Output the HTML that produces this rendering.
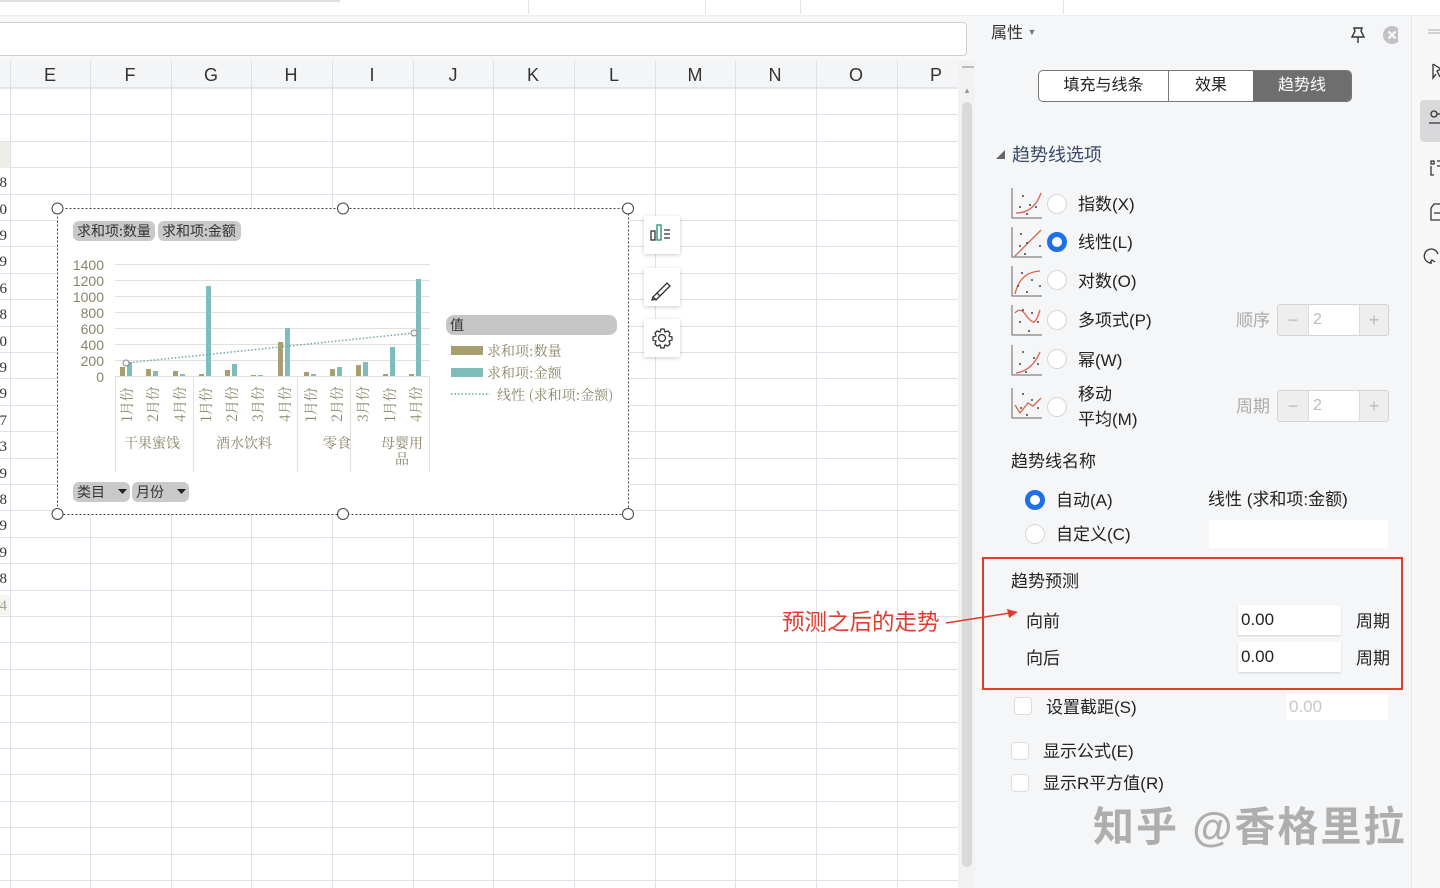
<!DOCTYPE html>
<html><head><meta charset="utf-8"><style>
*{margin:0;padding:0;box-sizing:border-box}
body{width:1440px;height:888px;overflow:hidden;position:relative;background:#fff;font-family:"Liberation Sans","Noto Sans CJK SC",sans-serif;color:#222}
.a{position:absolute}
.t{position:absolute;font-size:16px;white-space:nowrap;line-height:1}
.radio{position:absolute;width:20px;height:20px;border-radius:50%;border:1px solid #d6d6d6;background:#fff}
.radio.on{border:5px solid #1f6fe8;background:#fff}
.cb{position:absolute;width:18px;height:18px;border-radius:4px;border:1px solid #dcdcdc;background:#fff}
.inp{position:absolute;background:#fff;box-shadow:0 1px 2px rgba(0,0,0,.15);font-size:17px;padding:6px 3px;line-height:1}
.spin{position:absolute;width:112px;height:32px;border:1px solid #d4d4d4;border-radius:3px;background:#eee;display:flex}
.spin div{display:flex;align-items:center;justify-content:center;color:#bbb;font-size:18px}
</style></head><body>
<div class="a" style="left:0;top:0;width:1440px;height:16px;background:#fff;border-bottom:1px solid #eee"></div>
<div class="a" style="left:0;top:0;width:340px;height:2px;background:#dfe0e6"></div>
<div class="a" style="left:528px;top:0;width:1px;height:14px;background:#e4e4e4"></div>
<div class="a" style="left:705px;top:0;width:1px;height:14px;background:#e4e4e4"></div>
<div class="a" style="left:800px;top:0;width:1px;height:14px;background:#e4e4e4"></div>
<div class="a" style="left:1063px;top:0;width:1px;height:14px;background:#e4e4e4"></div>
<div class="a" style="left:0;top:16px;width:975px;height:44px;background:#f7f7f8"></div>
<div class="a" style="left:-6px;top:22px;width:973px;height:34px;background:#fff;border:1px solid #cfcfd2;border-radius:4px"></div>
<svg class="a" style="left:0;top:60px" width="958" height="828">
<rect x="0" y="0" width="958" height="28" fill="#f4f5f7"/>
<line x1="0" y1="28" x2="958" y2="28" stroke="#cfd2da"/>
<g stroke="#dfe1ea" stroke-width="1">
<line x1="10.5" y1="0" x2="10.5" y2="828"/><line x1="90.5" y1="0" x2="90.5" y2="828"/><line x1="171.5" y1="0" x2="171.5" y2="828"/><line x1="251.5" y1="0" x2="251.5" y2="828"/><line x1="332.5" y1="0" x2="332.5" y2="828"/><line x1="413.5" y1="0" x2="413.5" y2="828"/><line x1="493.5" y1="0" x2="493.5" y2="828"/><line x1="574.5" y1="0" x2="574.5" y2="828"/><line x1="655.5" y1="0" x2="655.5" y2="828"/><line x1="735.5" y1="0" x2="735.5" y2="828"/><line x1="816.5" y1="0" x2="816.5" y2="828"/><line x1="897.5" y1="0" x2="897.5" y2="828"/>
</g>
<g stroke="#dfe1ea">
<line x1="0" x2="958" y1="54.5" y2="54.5"/><line x1="0" x2="958" y1="81.5" y2="81.5"/><line x1="0" x2="958" y1="107.5" y2="107.5"/><line x1="0" x2="958" y1="134.5" y2="134.5"/><line x1="0" x2="958" y1="160.5" y2="160.5"/><line x1="0" x2="958" y1="186.5" y2="186.5"/><line x1="0" x2="958" y1="213.5" y2="213.5"/><line x1="0" x2="958" y1="239.5" y2="239.5"/><line x1="0" x2="958" y1="266.5" y2="266.5"/><line x1="0" x2="958" y1="292.5" y2="292.5"/><line x1="0" x2="958" y1="318.5" y2="318.5"/><line x1="0" x2="958" y1="345.5" y2="345.5"/><line x1="0" x2="958" y1="371.5" y2="371.5"/><line x1="0" x2="958" y1="398.5" y2="398.5"/><line x1="0" x2="958" y1="424.5" y2="424.5"/><line x1="0" x2="958" y1="450.5" y2="450.5"/><line x1="0" x2="958" y1="477.5" y2="477.5"/><line x1="0" x2="958" y1="503.5" y2="503.5"/><line x1="0" x2="958" y1="530.5" y2="530.5"/><line x1="0" x2="958" y1="556.5" y2="556.5"/><line x1="0" x2="958" y1="582.5" y2="582.5"/><line x1="0" x2="958" y1="609.5" y2="609.5"/><line x1="0" x2="958" y1="635.5" y2="635.5"/><line x1="0" x2="958" y1="662.5" y2="662.5"/><line x1="0" x2="958" y1="688.5" y2="688.5"/><line x1="0" x2="958" y1="714.5" y2="714.5"/><line x1="0" x2="958" y1="741.5" y2="741.5"/><line x1="0" x2="958" y1="767.5" y2="767.5"/><line x1="0" x2="958" y1="794.5" y2="794.5"/><line x1="0" x2="958" y1="820.5" y2="820.5"/>
</g>
<rect x="0" y="82" width="10" height="26" fill="#efeee4"/>
<g font-family="Liberation Sans" font-size="18" fill="#333" text-anchor="middle">
<text x="50" y="21">E</text><text x="130" y="21">F</text><text x="211" y="21">G</text><text x="291" y="21">H</text><text x="372" y="21">I</text><text x="453" y="21">J</text><text x="533" y="21">K</text><text x="614" y="21">L</text><text x="695" y="21">M</text><text x="775" y="21">N</text><text x="856" y="21">O</text><text x="936" y="21">P</text>
</g>
<g font-family="Liberation Serif" font-size="15" fill="#333" text-anchor="end">
<text x="7" y="127">8</text><text x="7" y="154">0</text><text x="7" y="180">9</text><text x="7" y="206">9</text><text x="7" y="233">6</text><text x="7" y="259">8</text><text x="7" y="286">0</text><text x="7" y="312">9</text><text x="7" y="338">9</text><text x="7" y="365">7</text><text x="7" y="391">3</text><text x="7" y="418">9</text><text x="7" y="444">8</text><text x="7" y="470">9</text><text x="7" y="497">9</text><text x="7" y="523">8</text><text x="7" y="550">4</text>
</g>
<rect x="0" y="535" width="10" height="20" fill="#efeee4" opacity=".6"/>
</svg>
<div class="a" style="left:958px;top:60px;width:17px;height:828px;background:#f2f2f3"></div>
<div class="a" style="left:962px;top:66px;width:12px;height:2px;border-top:1px solid #bbb;border-bottom:1px solid #bbb"></div>
<div class="a" style="left:963px;top:86px;font-size:8px;color:#999">▲</div>
<div class="a" style="left:962px;top:102px;width:10px;height:765px;background:#d9d9db;border-radius:5px"></div>
<svg class="a" style="left:50px;top:200px" width="640" height="322">
<rect x="7.5" y="8.5" width="571" height="306" fill="#fff" stroke="#444" stroke-dasharray="2,2"/>
<g fill="#fff" stroke="#444"><circle cx="7.5" cy="8.5" r="5.5"/><circle cx="293" cy="8.5" r="5.5"/><circle cx="578" cy="8.5" r="5.5"/><circle cx="7.5" cy="314" r="5.5"/><circle cx="293" cy="314" r="5.5"/><circle cx="578" cy="314" r="5.5"/></g>
<rect x="23" y="21" width="82" height="20" rx="6" fill="#c9c9c9"/><rect x="108" y="21" width="83" height="20" rx="6" fill="#c9c9c9"/>
<text x="27" y="36" font-size="14" fill="#333" font-family="Noto Sans CJK SC">求和项:数量</text>
<text x="112" y="36" font-size="14" fill="#333" font-family="Noto Sans CJK SC">求和项:金额</text>
<g stroke="#e1e0dc"><line x1="65" x2="380" y1="64.5" y2="64.5"/><line x1="65" x2="380" y1="80.5" y2="80.5"/><line x1="65" x2="380" y1="96.5" y2="96.5"/><line x1="65" x2="380" y1="112.5" y2="112.5"/><line x1="65" x2="380" y1="128.5" y2="128.5"/><line x1="65" x2="380" y1="144.5" y2="144.5"/><line x1="65" x2="380" y1="160.5" y2="160.5"/><line x1="65" x2="380" y1="176.5" y2="176.5"/></g>
<g font-size="14" fill="#8a8466" text-anchor="end" font-family="Liberation Sans"><text x="54" y="70">1400</text><text x="54" y="86">1200</text><text x="54" y="102">1000</text><text x="54" y="118">800</text><text x="54" y="134">600</text><text x="54" y="150">400</text><text x="54" y="166">200</text><text x="54" y="182">0</text></g>
<g fill="#a79f70">
<rect x="70" y="167" width="5" height="9"/><rect x="96" y="169" width="5" height="7"/><rect x="123" y="171" width="5" height="5"/><rect x="149" y="174" width="5" height="2"/><rect x="175" y="170" width="5" height="6"/><rect x="201" y="175" width="5" height="1"/><rect x="228" y="142" width="5" height="34"/><rect x="254" y="172" width="5" height="4"/><rect x="280" y="169" width="5" height="7"/><rect x="306" y="165" width="5" height="11"/><rect x="333" y="174" width="5" height="2"/><rect x="359" y="174" width="5" height="2"/>
</g>
<g fill="#7fbcbc">
<rect x="77" y="162" width="5" height="14"/><rect x="103" y="171" width="5" height="5"/><rect x="130" y="174" width="5" height="2"/><rect x="156" y="86" width="5" height="90"/><rect x="182" y="164" width="5" height="12"/><rect x="208" y="175" width="5" height="1"/><rect x="235" y="128" width="5" height="48"/><rect x="261" y="174" width="5" height="2"/><rect x="287" y="167" width="5" height="9"/><rect x="313" y="162" width="5" height="14"/><rect x="340" y="147" width="5" height="29"/><rect x="366" y="79" width="5" height="97"/>
</g>
<line x1="76" y1="163" x2="364" y2="133" stroke="#6fa8a8" stroke-width="1.5" stroke-dasharray="1.5,2"/>
<circle cx="76" cy="163" r="3" fill="#fff" stroke="#888"/><circle cx="364" cy="133" r="3" fill="#fff" stroke="#888"/>
<g stroke="#e1e0dc"><line x1="65.5" y1="176" x2="65.5" y2="272"/><line x1="143.5" y1="176" x2="143.5" y2="272"/><line x1="247.5" y1="176" x2="247.5" y2="272"/><line x1="300.5" y1="176" x2="300.5" y2="272"/><line x1="379.5" y1="176" x2="379.5" y2="272"/></g>
<g font-size="14" fill="#8a8466" font-family="Noto Serif CJK SC">
<text transform="translate(82,222) rotate(-90)">1月份</text><text transform="translate(108,222) rotate(-90)">2月份</text><text transform="translate(135,222) rotate(-90)">4月份</text><text transform="translate(161,222) rotate(-90)">1月份</text><text transform="translate(187,222) rotate(-90)">2月份</text><text transform="translate(213,222) rotate(-90)">3月份</text><text transform="translate(240,222) rotate(-90)">4月份</text><text transform="translate(266,222) rotate(-90)">1月份</text><text transform="translate(292,222) rotate(-90)">2月份</text><text transform="translate(318,222) rotate(-90)">3月份</text><text transform="translate(345,222) rotate(-90)">1月份</text><text transform="translate(371,222) rotate(-90)">4月份</text>
<text x="74" y="248">干果蜜饯</text><text x="166" y="248">酒水饮料</text><text x="273" y="248">零食</text><text x="331" y="248">母婴用</text><text x="345" y="264">品</text>
</g>
<rect x="396" y="115" width="171" height="20" rx="8" fill="#c6c6c6"/>
<text x="400" y="130" font-size="14" fill="#333" font-family="Noto Sans CJK SC">值</text>
<rect x="401" y="146" width="32" height="9" fill="#a79f70"/><text x="437" y="156" font-size="14" fill="#8a8466" font-family="Noto Serif CJK SC">求和项:数量</text>
<rect x="401" y="168" width="32" height="9" fill="#7fbcbc"/><text x="437" y="178" font-size="14" fill="#8a8466" font-family="Noto Serif CJK SC">求和项:金额</text>
<line x1="401" y1="194" x2="440" y2="194" stroke="#6fa8a8" stroke-width="1.5" stroke-dasharray="1.5,2"/><text x="447" y="200" font-size="14" fill="#8a8466" font-family="Noto Serif CJK SC">线性 (求和项:金额)</text>
<rect x="23" y="282" width="57" height="20" rx="6" fill="#c9c9c9"/><rect x="82" y="282" width="57" height="20" rx="6" fill="#c9c9c9"/>
<text x="27" y="297" font-size="14" fill="#333" font-family="Noto Sans CJK SC">类目</text><text x="86" y="297" font-size="14" fill="#333" font-family="Noto Sans CJK SC">月份</text>
<path d="M68 289h9l-4.5 5z M127 289h9l-4.5 5z" fill="#222"/>
</svg>
<div class="a" style="left:644px;top:216px;width:36px;height:38px;background:#fff;box-shadow:0 1px 4px rgba(0,0,0,.2)"></div>
<div class="a" style="left:644px;top:268px;width:36px;height:38px;background:#fff;box-shadow:0 1px 4px rgba(0,0,0,.2)"></div>
<div class="a" style="left:644px;top:319px;width:36px;height:38px;background:#fff;box-shadow:0 1px 4px rgba(0,0,0,.2)"></div>
<svg class="a" style="left:644px;top:216px" width="36" height="145" fill="none" stroke="#333" stroke-width="1.3">
<rect x="7" y="15" width="4" height="9"/><rect x="13" y="9" width="4" height="15" stroke="#2a8a6a"/><path d="M20 14h6M20 18h6M20 22h6"/>
<path d="M9 81l4-4 3 3-4 4z M13 77l10-10 3 3-10 10" /><path d="M9 81l-1 3 4-1"/>
<circle cx="18" cy="122" r="3.5"/><path d="M18 113l2 0 1 3 3-1 2 2-1 3 3 1v3l-3 1 1 3-2 2-3-1-1 3h-3l-1-3-3 1-2-2 1-3-3-1v-3l3-1-1-3 2-2 3 1 1-3z"/>
</svg>
<div class="a" style="left:975px;top:16px;width:437px;height:872px;background:#f5f6f8"></div>
<div class="a" style="left:1411px;top:16px;width:1px;height:872px;background:#e6e6e8"></div>
<div class="a" style="left:1412px;top:16px;width:28px;height:872px;background:#f7f7f8"></div>
<div class="a" style="left:1420px;top:100px;width:20px;height:42px;background:#d9d9db;border-radius:4px 0 0 4px"></div>
<svg class="a" style="left:1412px;top:16px" width="28" height="260" fill="none" stroke="#333" stroke-width="1.3">
<path d="M16 14h12M16 17h12" stroke="#bbb"/>
<path d="M21 48l8 5-4 2 3 6" /><path d="M21 48v14l3-4"/>
<circle cx="22" cy="98" r="3"/><path d="M25 98h3M17 107h11"/>
<path d="M19 145h3v3h-3zM19 150v9h3M25 145h3M25 150h3"/>
<path d="M19 192l3-4h6M19 192v12h9M22 197h6"/>
<path d="M26 238a7 7 0 1 0 -6 9M18 247l2-3 3 2"/>
</svg>
<div class="t" style="left:991px;top:26px;font-size:16px;color:#333">属性 <span style="font-size:9px;color:#777;vertical-align:3px">▼</span></div>
<svg class="a" style="left:1348px;top:24px" width="50" height="24">
<path d="M6 4h8l-1 3 3 6H4l3-6z M10 13v6" fill="none" stroke="#333" stroke-width="1.4"/>
<circle cx="44" cy="11" r="9" fill="#c2c2c4"/><path d="M40.5 7.5l7 7M47.5 7.5l-7 7" stroke="#fff" stroke-width="2"/>
</svg>
<div class="a" style="left:1038px;top:70px;width:314px;height:32px;border:1px solid #777;border-radius:5px;overflow:hidden;display:flex;background:#fff;font-size:16px">
<div style="width:130px;text-align:center;line-height:30px;border-right:1px solid #777">填充与线条</div>
<div style="width:84px;text-align:center;line-height:30px">效果</div>
<div style="flex:1;text-align:center;line-height:30px;background:#6e6e6e;color:#fff">趋势线</div>
</div>
<div class="t" style="left:996px;top:151px;font-size:9px;color:#666">◢</div>
<div class="t" style="left:1012px;top:146px;font-size:18px;color:#3a4a66">趋势线选项</div>
<svg class="a" style="left:1010px;top:186px" width="36" height="240" fill="none">
<g stroke="#666"><path d="M2 2v30h30"/><path d="M2 41v30h30"/><path d="M2 80v30h30"/><path d="M2 119v30h30"/><path d="M2 159v30h30"/><path d="M2 202v30h30"/></g>
<g stroke="#e0604a" stroke-width="1.3">
<path d="M6 27q18 0 25-20"/><path d="M5 70l26-26"/><path d="M5 108q5-22 25-23"/><path d="M5 127q5-6 10 1t8 8 7-12"/><path d="M6 187q16-2 24-21"/><path d="M5 219l5 8 8-10 5 3 8-8"/>
</g>
<g fill="#444">
<circle cx="13" cy="10" r="1"/><circle cx="20" cy="19" r="1"/><circle cx="10" cy="21" r="1"/><circle cx="26" cy="21" r="1"/><circle cx="17" cy="28" r="1"/>
<circle cx="11" cy="48" r="1"/><circle cx="17" cy="57" r="1"/><circle cx="10" cy="60" r="1"/><circle cx="30" cy="60" r="1"/><circle cx="15" cy="68" r="1"/>
<circle cx="12" cy="87" r="1"/><circle cx="22" cy="94" r="1"/><circle cx="8" cy="100" r="1"/><circle cx="30" cy="100" r="1"/><circle cx="17" cy="106" r="1"/>
<circle cx="13" cy="124" r="1"/><circle cx="22" cy="127" r="1"/><circle cx="10" cy="136" r="1"/><circle cx="28" cy="136" r="1"/><circle cx="19" cy="145" r="1"/>
<circle cx="13" cy="166" r="1"/><circle cx="24" cy="172" r="1"/><circle cx="10" cy="178" r="1"/><circle cx="28" cy="178" r="1"/><circle cx="16" cy="186" r="1"/>
<circle cx="13" cy="208" r="1"/><circle cx="22" cy="214" r="1"/><circle cx="11" cy="222" r="1"/><circle cx="28" cy="222" r="1"/><circle cx="17" cy="229" r="1"/>
</g></svg>
<div class="radio" style="left:1047px;top:194px"></div>
<div class="radio on" style="left:1047px;top:232px"></div>
<div class="radio" style="left:1047px;top:270px"></div>
<div class="radio" style="left:1047px;top:310px"></div>
<div class="radio" style="left:1047px;top:349px"></div>
<div class="radio" style="left:1047px;top:397px"></div>
<div class="t" style="left:1078px;top:196px;font-size:17px">指数(X)</div>
<div class="t" style="left:1078px;top:234px;font-size:17px">线性(L)</div>
<div class="t" style="left:1078px;top:273px;font-size:17px">对数(O)</div>
<div class="t" style="left:1078px;top:312px;font-size:17px">多项式(P)</div>
<div class="t" style="left:1078px;top:352px;font-size:17px">幂(W)</div>
<div class="t" style="left:1078px;top:386px;font-size:17px">移动</div>
<div class="t" style="left:1078px;top:411px;font-size:17px">平均(M)</div>
<div class="t" style="left:1236px;top:312px;font-size:17px;color:#aaa">顺序</div>
<div class="t" style="left:1236px;top:398px;font-size:17px;color:#aaa">周期</div>
<div class="spin" style="left:1277px;top:304px"><div style="width:30px">−</div><div style="width:52px;background:#fff;justify-content:flex-start;padding-left:4px;border-left:1px solid #ddd;border-right:1px solid #ddd;font-size:16px">2</div><div style="flex:1">+</div></div>
<div class="spin" style="left:1277px;top:390px"><div style="width:30px">−</div><div style="width:52px;background:#fff;justify-content:flex-start;padding-left:4px;border-left:1px solid #ddd;border-right:1px solid #ddd;font-size:16px">2</div><div style="flex:1">+</div></div>
<div class="t" style="left:1011px;top:453px;font-size:17px">趋势线名称</div>
<div class="radio on" style="left:1025px;top:490px"></div>
<div class="radio" style="left:1025px;top:524px"></div>
<div class="t" style="left:1056px;top:492px;font-size:17px">自动(A)</div>
<div class="t" style="left:1056px;top:526px;font-size:17px">自定义(C)</div>
<div class="t" style="left:1208px;top:491px;font-size:17px">线性 (求和项:金额)</div>
<div class="a" style="left:1209px;top:520px;width:179px;height:28px;background:#fff"></div>
<div class="a" style="left:982px;top:557px;width:421px;height:133px;border:2px solid #e03c2c"></div>
<div class="t" style="left:1011px;top:573px;font-size:17px">趋势预测</div>
<div class="t" style="left:1026px;top:613px;font-size:17px">向前</div>
<div class="t" style="left:1026px;top:650px;font-size:17px">向后</div>
<div class="inp" style="left:1238px;top:605px;width:103px;height:30px">0.00</div>
<div class="inp" style="left:1238px;top:642px;width:103px;height:30px">0.00</div>
<div class="t" style="left:1356px;top:613px;font-size:17px">周期</div>
<div class="t" style="left:1356px;top:650px;font-size:17px">周期</div>
<div class="cb" style="left:1014px;top:697px"></div>
<div class="cb" style="left:1011px;top:742px"></div>
<div class="cb" style="left:1011px;top:774px"></div>
<div class="t" style="left:1046px;top:699px;font-size:17px">设置截距(S)</div>
<div class="t" style="left:1043px;top:743px;font-size:17px">显示公式(E)</div>
<div class="t" style="left:1043px;top:775px;font-size:17px">显示R平方值(R)</div>
<div class="a" style="left:1286px;top:693px;width:102px;height:27px;background:#fff;color:#c8c8c8;font-size:17px;padding:5px 3px;line-height:1">0.00</div>
<div class="t" style="left:1093px;top:807px;font-size:41px;font-weight:bold;color:rgba(150,150,150,.75);letter-spacing:2px">知乎 @香格里拉</div>
<div class="t" style="left:782px;top:612px;font-size:22.5px;color:#e03c2c">预测之后的走势</div>
<svg class="a" style="left:940px;top:604px" width="85" height="30"><path d="M6 19L70 9" stroke="#e03c2c" stroke-width="1.6"/><path d="M78 8l-11-3 2 9z" fill="#e03c2c"/></svg>
</body></html>
